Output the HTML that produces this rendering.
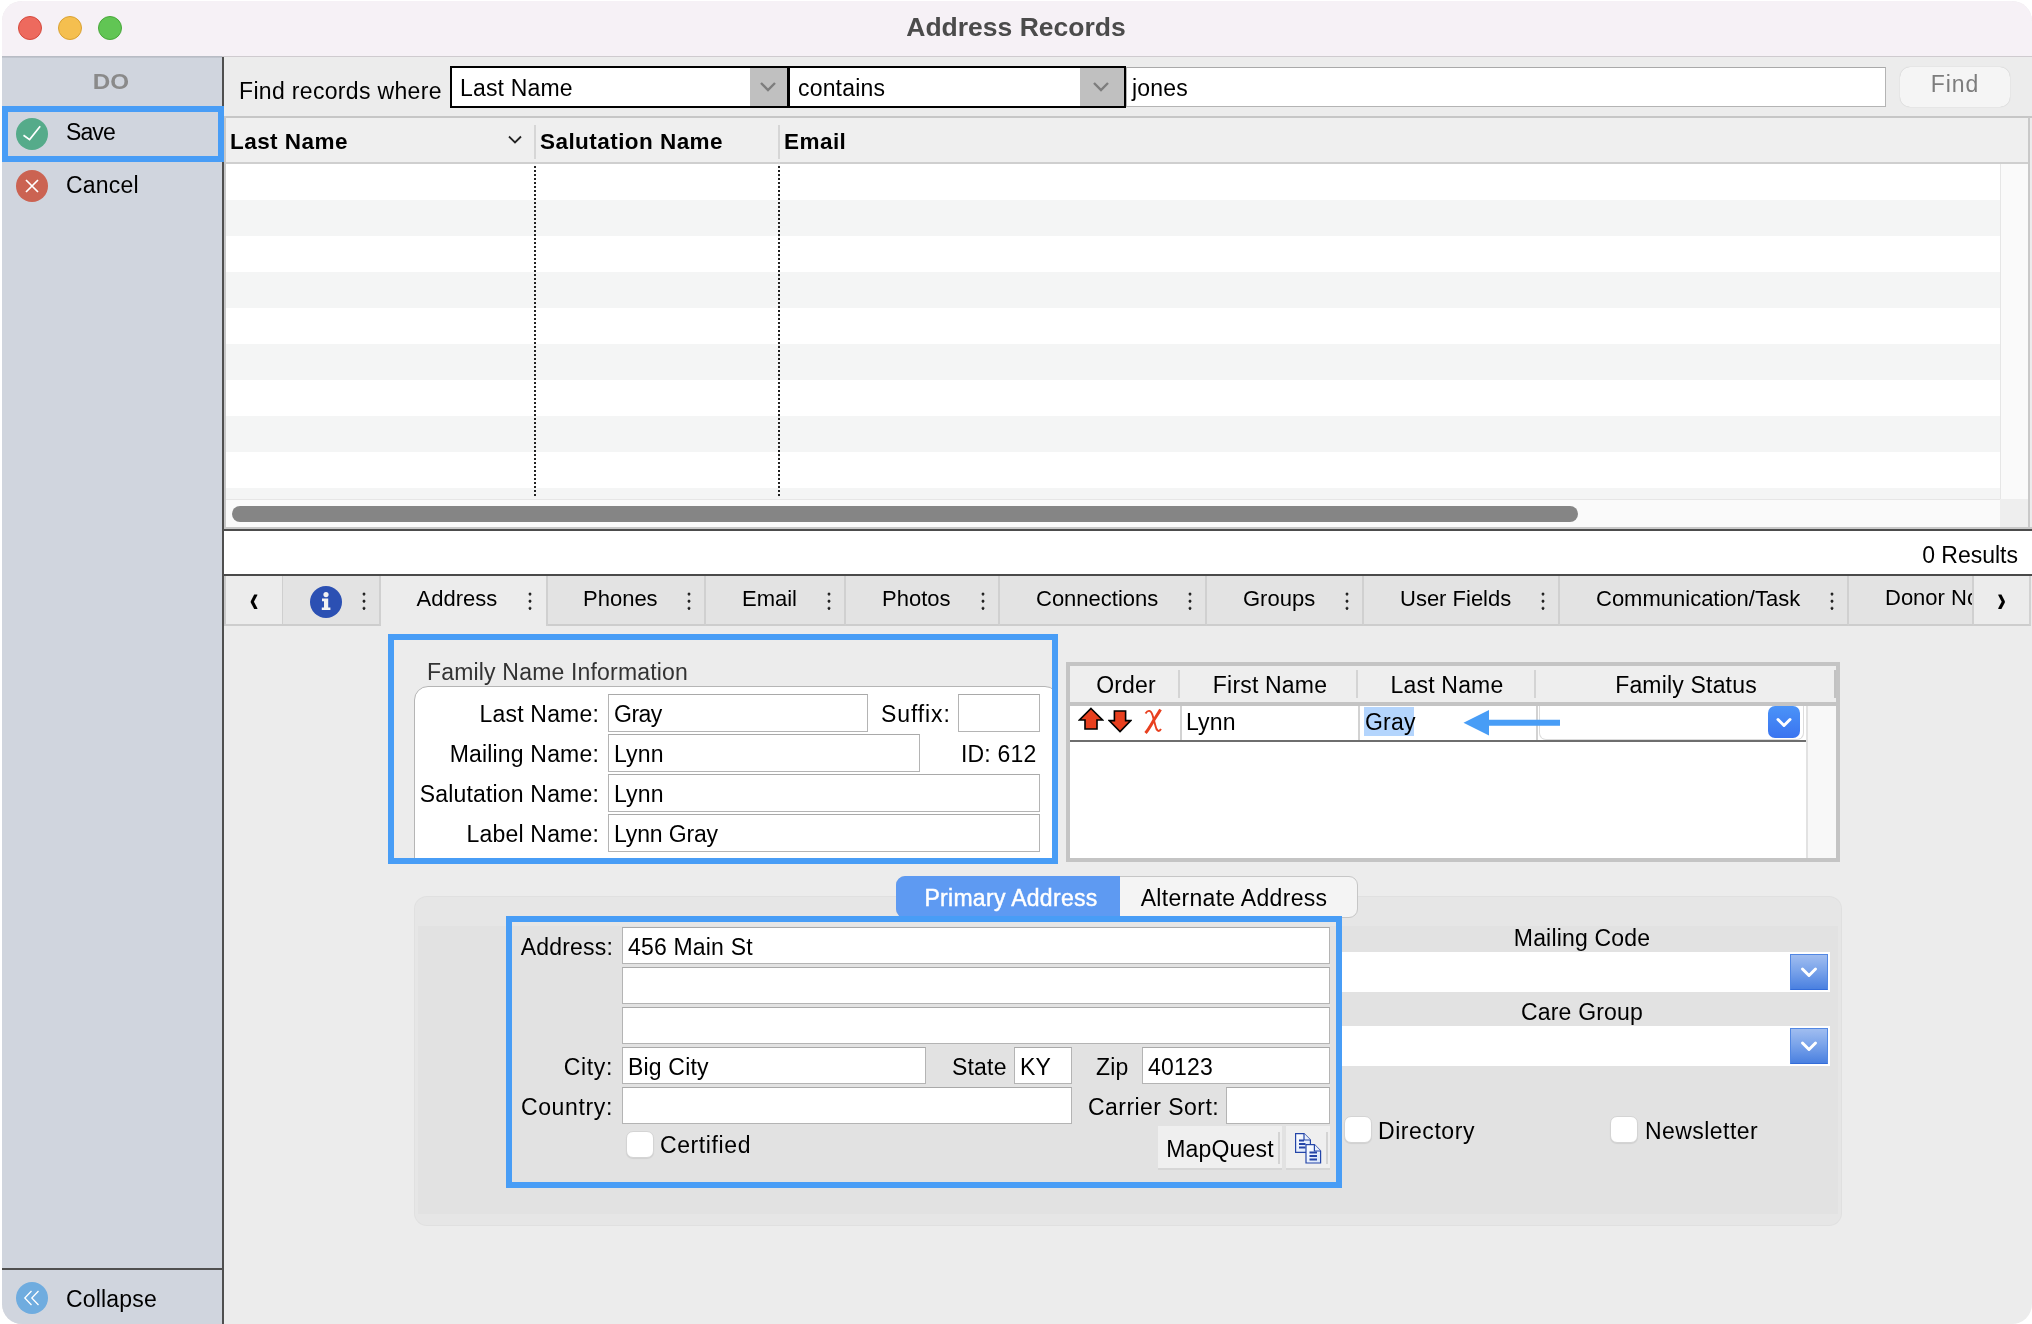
<!DOCTYPE html>
<html lang="en">
<head>
<meta charset="utf-8">
<title>Address Records</title>
<style>
*{box-sizing:border-box;margin:0;padding:0}
html,body{width:2032px;height:1324px;overflow:hidden;background:#fff}
body{font-family:"Liberation Sans","DejaVu Sans",sans-serif;font-size:22px;color:#000;position:relative}
.abs,.t,.win *{position:absolute}
.win{will-change:transform;position:absolute;left:2px;top:1px;width:2030px;height:1323px;border-radius:20px 20px 20px 20px;overflow:hidden;background:#ececec}
.t{white-space:nowrap;line-height:26px;height:26px}
.titlebar{left:0;top:0;width:2030px;height:56px;background:#f6f1f6;border-bottom:1px solid #cfcbcf}
.title{left:-1px;width:2030px;top:11px;text-align:center;font-weight:bold;font-size:26.5px;line-height:30px;height:30px;color:#4b4b4b}
.tl{width:24px;height:24px;border-radius:50%;top:15px}
.sidebar{left:0;top:56px;width:220px;height:1267px;background:#d0d5de}
.sideline{left:220px;top:56px;width:2px;height:1267px;background:#4f4f4f}
.field{background:#fff;border:1px solid #b4b4b4;border-top-color:#a9a9a9}
.sf{font-size:23px;letter-spacing:0.18px}
.hb{font-weight:bold;font-size:22.5px;letter-spacing:0.45px}
.tab{background:#e3e3e3;border-right:2px solid #d0d0d0;border-bottom:2px solid #cdcdcd}
.tab.sel{background:#ececec;border-bottom:none;border-right:2px solid #d0d0d0}
.dots{width:4px;height:20px;background:radial-gradient(circle at 2px 2px,#1e1e1e 1.1px,rgba(30,30,30,0) 1.8px) 0 0/4px 7.2px repeat-y}
.cb{width:28px;height:27px;background:#fff;border:1px solid #d4d4d4;border-radius:7px;box-shadow:0 1px 1px rgba(0,0,0,.08)}
.blue{border:6px solid #489df6}
</style>
</head>
<body>
<div class="win" id="win">
  <!-- title bar -->
  <div class="titlebar"></div>
  <div class="t title">Address Records</div>
  <div class="tl" style="left:16px;background:#ed6a5e;border:1px solid #d5493d"></div>
  <div class="tl" style="left:56px;background:#f5bf4f;border:1px solid #d9a132"></div>
  <div class="tl" style="left:96px;background:#61c554;border:1px solid #48a73a"></div>

  <!-- sidebar -->
  <div class="sidebar"></div>
  <div class="sideline"></div>

  <!-- sidebar content -->
  <div style="left:0;top:55px;width:220px;height:2px;background:linear-gradient(#b4b8c0,#c4c9d2)"></div>
  <div class="t" style="left:-1.5px;width:220px;top:68px;text-align:center;font-weight:bold;color:#8a8a8a;font-size:22px;transform:scaleX(1.1)">DO</div>
  <div class="blue" style="left:0;top:105px;width:222px;height:56px"></div>
  <svg style="left:14px;top:117px" width="32" height="32" viewBox="0 0 32 32"><circle cx="16" cy="16" r="16" fill="#55ab8a"/><path d="M7.5 17.2 L13.6 21.6 L24.2 8.2" fill="none" stroke="#fff" stroke-width="1.7"/></svg>
  <div class="t sf" style="left:64px;top:118px;letter-spacing:-0.9px">Save</div>
  <svg style="left:14px;top:169px" width="32" height="32" viewBox="0 0 32 32"><circle cx="16" cy="16" r="16" fill="#cb6352"/><path d="M10 10 L22 22 M22 10 L10 22" fill="none" stroke="#fff" stroke-width="1.7"/></svg>
  <div class="t sf" style="left:64px;top:171px">Cancel</div>
  <div style="left:0;top:1267px;width:220px;height:2px;background:#4f4f4f"></div>
  <svg style="left:14px;top:1281px" width="32" height="32" viewBox="0 0 32 32"><circle cx="16" cy="16" r="16" fill="#6facdf"/><path d="M15.5 9 L8.8 16 L15.5 23 M22.5 9 L15.8 16 L22.5 23" fill="none" stroke="#fff" stroke-width="1.3"/></svg>
  <div class="t sf" style="left:64px;top:1285px">Collapse</div>

  <!-- find bar -->
  <div class="t sf" style="left:237px;top:77px;letter-spacing:0.33px">Find records where</div>
  <div style="left:448px;top:65px;width:339px;height:42px;background:#fff;border:2px solid #000"></div>
  <div style="left:748px;top:67px;width:37px;height:38px;background:#c0c0c0"></div>
  <svg style="left:755px;top:79px" width="22" height="14" viewBox="0 0 22 14"><path d="M4 3 L11 10 L18 3" fill="none" stroke="#7d7d7d" stroke-width="2.4"/></svg>
  <div class="t sf" style="left:458px;top:74px">Last Name</div>
  <div style="left:786px;top:65px;width:338px;height:42px;background:#fff;border:2px solid #000"></div>
  <div style="left:1078px;top:67px;width:44px;height:38px;background:#c0c0c0"></div>
  <svg style="left:1088px;top:79px" width="22" height="14" viewBox="0 0 22 14"><path d="M4 3 L11 10 L18 3" fill="none" stroke="#7d7d7d" stroke-width="2.4"/></svg>
  <div class="t sf" style="left:796px;top:74px">contains</div>
  <div class="field" style="left:1124px;top:66px;width:760px;height:40px"></div>
  <div class="t sf" style="left:1130px;top:74px">jones</div>
  <div style="left:1898px;top:66px;width:110px;height:40px;background:#f5f5f5;border-radius:10px;box-shadow:0 0 1px rgba(0,0,0,.25)"></div>
  <div class="t sf" style="left:1898px;width:110px;text-align:center;top:70px;color:#7d7d7d;letter-spacing:1px">Find</div>

  <!-- table -->
  <div style="left:222px;top:115px;width:1808px;height:2px;background:#c6c6c6"></div>
  <div style="left:222px;top:117px;width:1806px;height:44px;background:#efefef"></div>
  <div style="left:222px;top:161px;width:1806px;height:2px;background:#cfcfcf"></div>
  <div style="left:2026px;top:116px;width:2px;height:412px;background:#c9c9c9"></div>
  <div style="left:222px;top:115px;width:2px;height:413px;background:#c8c8c8"></div>
  <div style="left:224px;top:163px;width:1774px;height:36px;background:#fff"></div>
  <div style="left:224px;top:199px;width:1774px;height:36px;background:#f4f5f5"></div>
  <div style="left:224px;top:235px;width:1774px;height:36px;background:#fff"></div>
  <div style="left:224px;top:271px;width:1774px;height:36px;background:#f4f5f5"></div>
  <div style="left:224px;top:307px;width:1774px;height:36px;background:#fff"></div>
  <div style="left:224px;top:343px;width:1774px;height:36px;background:#f4f5f5"></div>
  <div style="left:224px;top:379px;width:1774px;height:36px;background:#fff"></div>
  <div style="left:224px;top:415px;width:1774px;height:36px;background:#f4f5f5"></div>
  <div style="left:224px;top:451px;width:1774px;height:36px;background:#fff"></div>
  <div style="left:224px;top:487px;width:1774px;height:11px;background:#f4f5f5"></div>
  <div class="t hb" style="left:228px;top:128px">Last Name</div>
  <svg style="left:504px;top:132px" width="18" height="14" viewBox="0 0 18 14"><path d="M3 3.5 L9 9.5 L15 3.5" fill="none" stroke="#222" stroke-width="1.8"/></svg>
  <div style="left:532px;top:124px;width:2px;height:34px;background:#d6d6d6"></div>
  <div class="t hb" style="left:538px;top:128px">Salutation Name</div>
  <div style="left:776px;top:124px;width:2px;height:34px;background:#d6d6d6"></div>
  <div class="t hb" style="left:782px;top:128px">Email</div>
  <div style="left:532px;top:165px;width:0;height:330px;border-left:2px dotted #222"></div>
  <div style="left:776px;top:165px;width:0;height:330px;border-left:2px dotted #222"></div>
  <!-- scrollbars -->
  <div style="left:1998px;top:163px;width:28px;height:335px;background:#fafafa;border-left:1px solid #e6e6e6"></div>
  <div style="left:224px;top:498px;width:1774px;height:28px;background:#fafafa;border-top:1px solid #e6e6e6"></div>
  <div style="left:1998px;top:498px;width:28px;height:28px;background:#eeeeee"></div>
  <div style="left:230px;top:505px;width:1346px;height:16px;border-radius:8px;background:#858585"></div>
  <div style="left:222px;top:526px;width:1808px;height:4px;background:linear-gradient(#c8c8c8,#c8c8c8 2px,#4c4c4c 2px)"></div>
  <!-- status -->
  <div style="left:222px;top:530px;width:1808px;height:43px;background:#fff"></div>
  <div class="t sf" style="left:1816px;width:200px;text-align:right;top:541px;letter-spacing:0px">0 Results</div>
  <div style="left:222px;top:573px;width:1808px;height:2px;background:#4a4a4a"></div>

  <!-- tab bar -->
  <div style="left:222px;top:575px;width:1808px;height:50px;background:#ececec"></div>
  <div style="left:222px;top:575px;width:60px;height:50px;background:#ececec;border-left:2px solid #cacaca;border-right:2px solid #cfcfcf;border-bottom:2px solid #cdcdcd"></div>
  <div class="t" style="left:222px;width:58px;text-align:center;top:581px;font-size:37px;line-height:36px;height:36px;transform:scaleX(.74);font-weight:bold;margin-left:1px">&#8249;</div>
  <div class="tab" style="left:281px;top:575px;width:98px;height:50px"></div>
  <svg style="left:308px;top:585px" width="32" height="32" viewBox="0 0 32 32"><circle cx="16" cy="16" r="16" fill="#2b50b3"/><circle cx="16" cy="8.6" r="2.6" fill="#f2f2f2"/><path d="M12 12.6 H18.2 V21.4 H20.4 V24 H11.8 V21.4 H14 V15.2 H12 Z" fill="#f2f2f2"/></svg>
  <div class="dots" style="left:360px;top:591px"></div>
  <div class="tab sel" style="left:379px;top:575px;width:167px;height:50px"></div>
  <div class="t" style="left:414.5px;top:585px">Address</div>
  <div class="dots" style="left:526px;top:591px"></div>
  <div class="tab" style="left:546px;top:575px;width:158px;height:50px"></div>
  <div class="t" style="left:581px;top:585px">Phones</div>
  <div class="dots" style="left:685px;top:591px"></div>
  <div class="tab" style="left:704px;top:575px;width:140px;height:50px"></div>
  <div class="t" style="left:740px;top:585px">Email</div>
  <div class="dots" style="left:825px;top:591px"></div>
  <div class="tab" style="left:844px;top:575px;width:154px;height:50px"></div>
  <div class="t" style="left:880px;top:585px">Photos</div>
  <div class="dots" style="left:979px;top:591px"></div>
  <div class="tab" style="left:998px;top:575px;width:207px;height:50px"></div>
  <div class="t" style="left:1034px;top:585px">Connections</div>
  <div class="dots" style="left:1186px;top:591px"></div>
  <div class="tab" style="left:1205px;top:575px;width:157px;height:50px"></div>
  <div class="t" style="left:1241px;top:585px">Groups</div>
  <div class="dots" style="left:1343px;top:591px"></div>
  <div class="tab" style="left:1362px;top:575px;width:196px;height:50px"></div>
  <div class="t" style="left:1398px;top:585px">User Fields</div>
  <div class="dots" style="left:1539px;top:591px"></div>
  <div class="tab" style="left:1558px;top:575px;width:289px;height:50px"></div>
  <div class="t" style="left:1594px;top:585px">Communication/Task</div>
  <div class="dots" style="left:1828px;top:591px"></div>
  <div class="tab" style="left:1847px;top:575px;width:125px;height:50px;overflow:hidden"><div class="t" style="left:36px;top:9px">Donor No</div></div>
  <div style="left:1972px;top:575px;width:57px;height:50px;background:#ececec;border-bottom:2px solid #cdcdcd;border-right:2px solid #d2d2d2"></div>
  <div class="t" style="left:1971px;width:57px;text-align:center;top:581px;font-size:37px;line-height:36px;height:36px;transform:scaleX(.74);font-weight:bold">&#8250;</div>

  <!-- family name information -->
  <div class="t sf" style="left:425px;top:658px;color:#333">Family Name Information</div>
  <div style="left:412px;top:685px;width:645px;height:190px;background:#fff;border:1px solid #b5b5b5;border-radius:14px"></div>
  <div class="t sf" style="left:397px;width:200px;text-align:right;top:700px">Last Name:</div>
  <div class="t sf" style="left:397px;width:200px;text-align:right;top:740px">Mailing Name:</div>
  <div class="t sf" style="left:397px;width:200px;text-align:right;top:780px">Salutation Name:</div>
  <div class="t sf" style="left:397px;width:200px;text-align:right;top:820px">Label Name:</div>
  <div class="field" style="left:606px;top:693px;width:260px;height:38px"></div>
  <div class="t sf" style="left:612px;top:700px;letter-spacing:-0.5px">Gray</div>
  <div class="field" style="left:606px;top:733px;width:312px;height:38px"></div>
  <div class="t sf" style="left:612px;top:740px">Lynn</div>
  <div class="field" style="left:606px;top:773px;width:432px;height:38px"></div>
  <div class="t sf" style="left:612px;top:780px">Lynn</div>
  <div class="field" style="left:606px;top:813px;width:432px;height:38px"></div>
  <div class="t sf" style="left:612px;top:820px;letter-spacing:-0.15px">Lynn Gray</div>
  <div class="field" style="left:956px;top:693px;width:82px;height:38px"></div>
  <div class="t sf" style="left:879px;top:700px;letter-spacing:0.9px">Suffix:</div>
  <div class="t sf" style="left:959px;top:740px">ID: 612</div>
  <div class="blue" style="left:386px;top:633px;width:670px;height:230px"></div>
  <div style="left:1056px;top:633px;width:8px;height:250px;background:#ececec"></div>
  <div style="left:386px;top:863px;width:680px;height:14px;background:#ececec"></div>

  <!-- family members grid -->
  <div style="left:1064px;top:661px;width:774px;height:200px;background:#fff;border:4px solid #c4c4c4"></div>
  <div style="left:1068px;top:665px;width:766px;height:36px;background:#eeeeee"></div>
  <div style="left:1068px;top:701px;width:766px;height:4px;background:#c4c4c4"></div>
  <div style="left:1176px;top:669px;width:2px;height:28px;background:#d4d4d4"></div>
  <div style="left:1354px;top:669px;width:2px;height:28px;background:#d4d4d4"></div>
  <div style="left:1532px;top:669px;width:2px;height:28px;background:#d4d4d4"></div>
  <div style="left:1832px;top:669px;width:2px;height:28px;background:#c2c2c2"></div>
  <div class="t sf" style="left:1024px;width:200px;text-align:center;top:671px">Order</div>
  <div class="t sf" style="left:1168px;width:200px;text-align:center;top:671px">First Name</div>
  <div class="t sf" style="left:1345px;width:200px;text-align:center;top:671px">Last Name</div>
  <div class="t sf" style="left:1584px;width:200px;text-align:center;top:671px">Family Status</div>
  <div style="left:1804px;top:705px;width:30px;height:152px;background:#f8f8f8;border-left:2px solid #e2e2e2"></div>
  <div style="left:1178px;top:705px;width:2px;height:34px;background:#d2d2d2"></div>
  <div style="left:1356px;top:705px;width:2px;height:34px;background:#d2d2d2"></div>
  <div style="left:1534px;top:705px;width:2px;height:34px;background:#d2d2d2"></div>
  <div style="left:1068px;top:739px;width:736px;height:2px;background:#6e6e6e"></div>
  <svg style="left:1076px;top:706px" width="26" height="24" viewBox="0 0 26 24"><path d="M13 1.5 L24.5 13 H19 V22 H7 V13 H1.5 Z" fill="#e8401f" stroke="#000" stroke-width="1.6" stroke-linejoin="miter"/></svg>
  <svg style="left:1106px;top:708px" width="24" height="24" viewBox="0 0 24 24"><path d="M12 22.6 L22.8 11.6 H17.6 V2 H6.4 V11.6 H1.2 Z" fill="#e8401f" stroke="#000" stroke-width="1.6" stroke-linejoin="miter"/></svg>
  <svg style="left:1141px;top:706px" width="20" height="28" viewBox="0 0 20 28"><path d="M2.5 6.5 C5 2.5 8 3 9.5 8 L12.5 19 C13.5 24 16 25.5 18 22" fill="none" stroke="#e8401f" stroke-width="1.9"/><path d="M17.5 2.5 C15 7 12 11 10 14.5 C8 18 5.5 22.5 2.5 26" fill="none" stroke="#e8401f" stroke-width="3"/></svg>
  <div class="t sf" style="left:1184px;top:708px">Lynn</div>
  <div style="left:1362px;top:706px;width:50px;height:29px;background:#b4d5fd"></div>
  <div class="t sf" style="left:1363px;top:708px">Gray</div>
  <div style="left:1537px;top:705px;width:265px;height:34px;background:#fff;border:1px solid #dcdcdc;border-top:none;border-radius:0 0 7px 7px"></div>
  <div style="left:1766px;top:705px;width:32px;height:32px;border-radius:7px;background:linear-gradient(#4a93f8,#3a74f0)"></div>
  <svg style="left:1766px;top:705px" width="32" height="32" viewBox="0 0 32 32"><path d="M10 13.5 L16 19.5 L22 13.5" fill="none" stroke="#fff" stroke-width="3" stroke-linecap="round" stroke-linejoin="round"/></svg>
  <svg style="left:1458px;top:705px" width="104" height="34" viewBox="0 0 104 34"><path d="M3.5 16.8 L29 4 V13.8 H100 V19.8 H29 V29.6 Z" fill="#489df6"/></svg>

  <!-- address panel -->
  <div style="left:413px;top:896px;width:1426px;height:328px;background:#e6e6e6;border-radius:12px;box-shadow:0 0 0 1px #e0e0e0"></div>
  <div style="left:416px;top:925px;width:1420px;height:288px;background:#e2e2e2"></div>
  <div style="left:894px;top:875px;width:462px;height:42px;background:#f4f4f4;border:1px solid #c6c6c6;border-radius:9px"></div>
  <div style="left:894px;top:875px;width:224px;height:42px;background:#5e9af2;border-radius:9px 0 0 9px"></div>
  <div class="t sf" style="left:897px;width:224px;text-align:center;top:884px;color:#fff;letter-spacing:0.3px;-webkit-text-stroke:0.45px #fff">Primary Address</div>
  <div class="t sf" style="left:1113px;width:238px;text-align:center;top:884px;letter-spacing:0.3px">Alternate Address</div>
  <div class="t sf" style="left:411px;width:200px;text-align:right;top:933px">Address:</div>
  <div class="t sf" style="left:411px;width:200px;text-align:right;top:1053px;letter-spacing:0.65px">City:</div>
  <div class="t sf" style="left:411px;width:200px;text-align:right;top:1093px;letter-spacing:0.65px">Country:</div>
  <div class="field" style="left:620px;top:926px;width:708px;height:37px"></div>
  <div class="t sf" style="left:626px;top:933px">456 Main St</div>
  <div class="field" style="left:620px;top:966px;width:708px;height:37px"></div>
  <div class="field" style="left:620px;top:1006px;width:708px;height:37px"></div>
  <div class="field" style="left:620px;top:1046px;width:304px;height:37px"></div>
  <div class="t sf" style="left:626px;top:1053px">Big City</div>
  <div class="field" style="left:1012px;top:1046px;width:58px;height:37px"></div>
  <div class="t sf" style="left:1018px;top:1053px">KY</div>
  <div class="field" style="left:1140px;top:1046px;width:188px;height:37px"></div>
  <div class="t sf" style="left:1146px;top:1053px">40123</div>
  <div class="field" style="left:620px;top:1086px;width:450px;height:37px"></div>
  <div class="field" style="left:1224px;top:1086px;width:104px;height:37px"></div>
  <div class="t sf" style="left:950px;top:1053px">State</div>
  <div class="t sf" style="left:1094px;top:1053px">Zip</div>
  <div class="t sf" style="left:1086px;top:1093px;letter-spacing:0.45px">Carrier Sort:</div>
  <div class="cb" style="left:624px;top:1130px"></div>
  <div class="t sf" style="left:658px;top:1131px;letter-spacing:0.6px">Certified</div>
  <div style="left:1156px;top:1125px;width:124px;height:44px;background:#efefef;border-bottom:2px solid #d6d6d6"></div>
  <div style="left:1276px;top:1131px;width:2px;height:32px;background:#d4d4d4"></div>
  <div class="t sf" style="left:1157px;width:122px;text-align:center;top:1135px">MapQuest</div>
  <div style="left:1284px;top:1125px;width:44px;height:44px;background:#efefef;border-bottom:2px solid #d6d6d6"></div>
  <div style="left:1324px;top:1131px;width:2px;height:32px;background:#d4d4d4"></div>
  <svg style="left:1291px;top:1131px" width="30" height="32" viewBox="0 0 30 32"><defs><linearGradient id="dg" x1="0" y1="0" x2="1" y2="1"><stop offset="0" stop-color="#fff"/><stop offset="1" stop-color="#d6e4fb"/></linearGradient></defs><g fill="url(#dg)" stroke="#2445a8" stroke-width="1.2" stroke-linejoin="miter"><path d="M2.6 1.6 H11 L17.4 8 V20.4 H2.6 Z"/><path d="M11 1.6 V8 H17.4" fill="#e9f0fd"/><path d="M13 12.6 H21.4 L27.6 19 V31 H13 Z"/><path d="M21.4 12.6 V19 H27.6" fill="#e9f0fd"/></g><g stroke="#2445a8" stroke-width="1.9"><path d="M6 8.5 H11 M6 12 H12.5 M6 15.5 H12.5 M16.5 20.5 H24 M16.5 24 H24 M16.5 27.5 H24"/></g></svg>
  <div class="blue" style="left:504px;top:915px;width:836px;height:272px"></div>
  <div class="t sf" style="left:1480px;width:200px;text-align:center;top:924px">Mailing Code</div>
  <div class="t sf" style="left:1480px;width:200px;text-align:center;top:998px">Care Group</div>
  <div style="left:1340px;top:951px;width:488px;height:40px;background:#fff"></div>
  <div style="left:1788px;top:953px;width:38px;height:36px;background:linear-gradient(#a0bdf0,#7ba4ea 45%,#4a80e0);border:1px solid #5287e3;border-bottom-color:#336cd9"></div>
  <svg style="left:1788px;top:953px" width="38" height="36" viewBox="0 0 38 36"><path d="M12.5 15 L19 21.5 L25.5 15" fill="none" stroke="#fff" stroke-width="3" stroke-linecap="round" stroke-linejoin="round"/></svg>
  <div style="left:1340px;top:1025px;width:488px;height:40px;background:#fff"></div>
  <div style="left:1788px;top:1027px;width:38px;height:36px;background:linear-gradient(#a0bdf0,#7ba4ea 45%,#4a80e0);border:1px solid #5287e3;border-bottom-color:#336cd9"></div>
  <svg style="left:1788px;top:1027px" width="38" height="36" viewBox="0 0 38 36"><path d="M12.5 15 L19 21.5 L25.5 15" fill="none" stroke="#fff" stroke-width="3" stroke-linecap="round" stroke-linejoin="round"/></svg>
  <div class="cb" style="left:1342px;top:1115px"></div>
  <div class="t sf" style="left:1376px;top:1117px;letter-spacing:0.55px">Directory</div>
  <div class="cb" style="left:1608px;top:1115px"></div>
  <div class="t sf" style="left:1643px;top:1117px;letter-spacing:0.45px">Newsletter</div>
</div>
</body>
</html>
